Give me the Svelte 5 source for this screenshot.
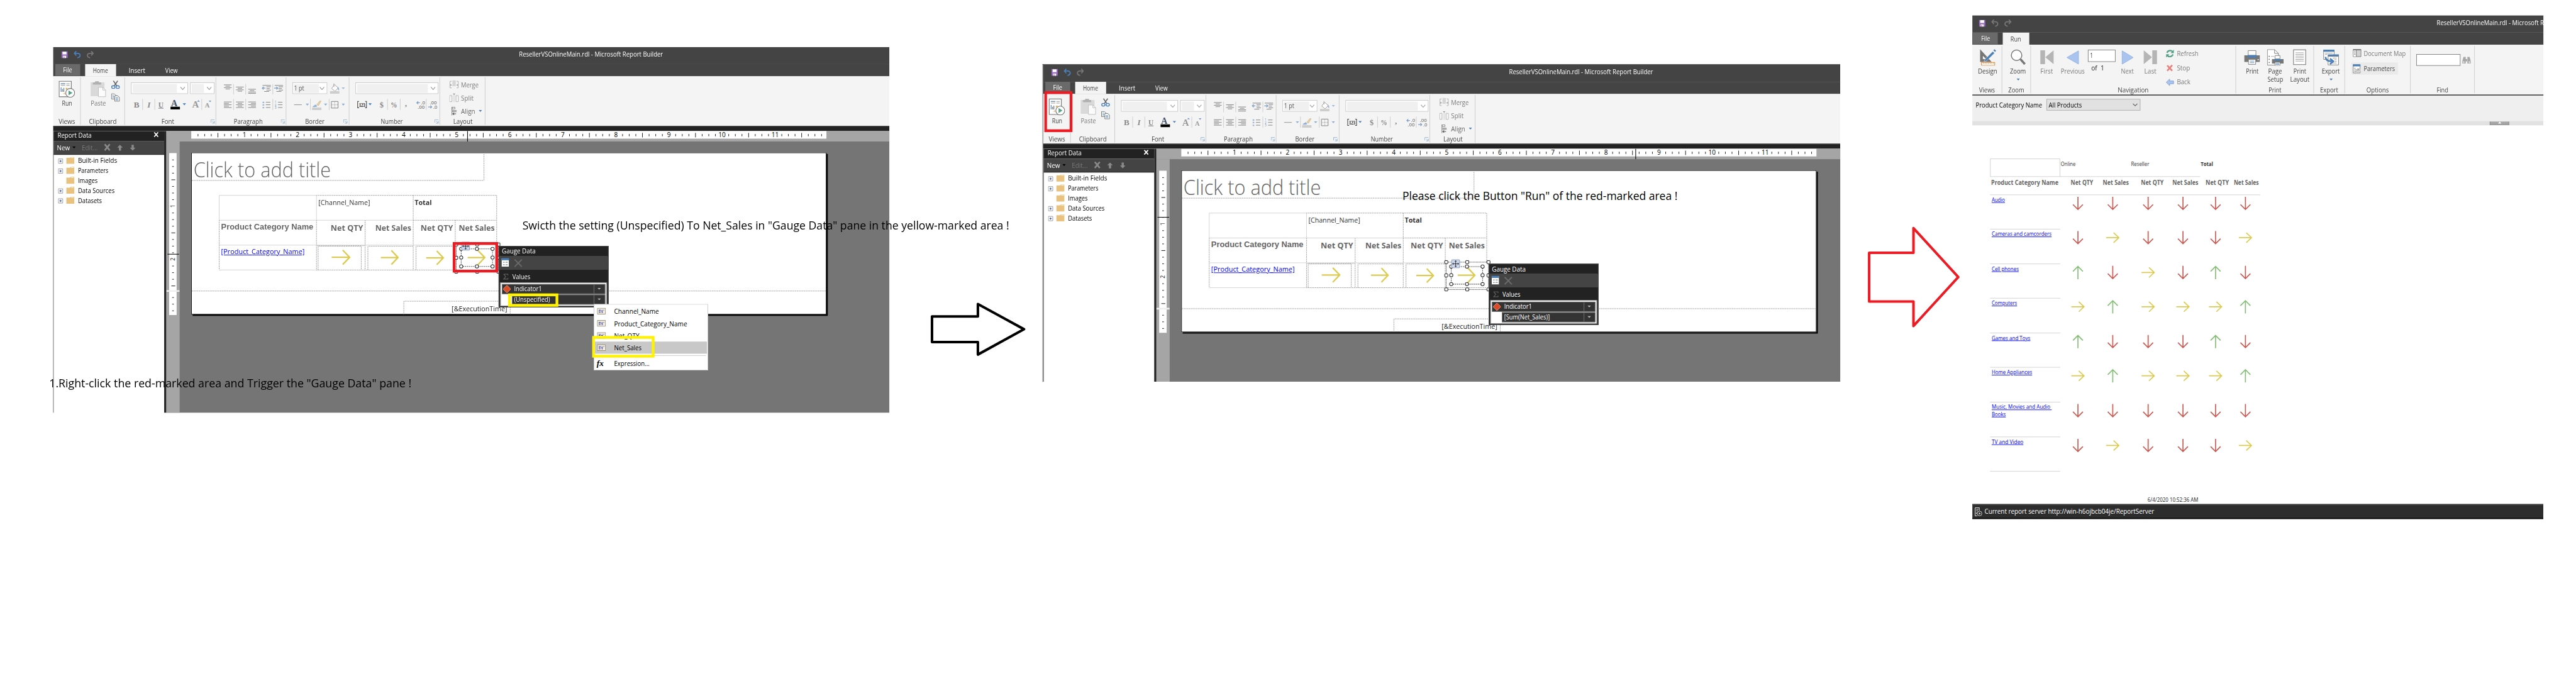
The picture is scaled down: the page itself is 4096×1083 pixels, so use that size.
<script>
  // Squeezes or stretches a label horizontally so that it takes exactly `w` pixels.
  function fit(node, w) {
    const n = node.offsetWidth;
    if (!n || !w) return;
    node.style.transform = `scaleX(${w / n})`;
    node.style.marginRight = `${w - n}px`;
  }

  const hTicks = Array.from({ length: 95 }, (_, i) => i + 1).filter((i) => i % 8);
  const inches = Array.from({ length: 11 }, (_, i) => i + 1);
  const vTicks = Array.from({ length: 20 }, (_, i) => i + 1).filter((i) => i % 8);

  const tree = [
    ['Built-in Fields', 71, true],
    ['Parameters', 55, true],
    ['Images', 35.5, false],
    ['Data Sources', 66.5, true],
    ['Datasets', 43.5, true]
  ];

  const menu = [
    ['Channel_Name', 81],
    ['Product_Category_Name', 132],
    ['Net_QTY', 45.5],
    ['Net_Sales', 49.5]
  ];

  const rows = [
    { lines: [['Audio', 24.2]], a: 'dddddd' },
    { lines: [['Cameras and camcorders', 108]], a: 'drdddr' },
    { lines: [['Cell phones', 49.3]], a: 'udrdud' },
    { lines: [['Computers', 46]], a: 'rurrru' },
    { lines: [['Games and Toys', 69.7]], a: 'udddud' },
    { lines: [['Home Appliances', 73]], a: 'rurrru' },
    { lines: [['Music, Movies and Audio\u00a0', 108.5], ['Books', 25.3]], a: 'dddddd' },
    { lines: [['TV and Video', 57]], a: 'drdddr' }
  ];
  const heads = [40.5, 46.8, 41, 46.5, 42, 45];
  const turn = { d: 90, r: 0, u: -90 };
  const tint = { d: '#cb5a52', r: '#dccb50', u: '#85be76' };
</script>

{#snippet T(s, w, c)}<span class="t {c ?? ''}" use:fit={w}>{s}</span>{/snippet}

{#snippet quick(undo)}
  <svg class="quick" width="62" height="14" viewBox="0 0 62 14">
    <path fill="#9a6bc0" d="M0 1h11.5v12H0z" /><path fill="#fff" d="M2.2 1.5h7v5h-7zM3 9h5.500v4H3z" /><path fill="#9a6bc0" d="M4.200 10.500h1.500V13H4.200z" />
    <g fill="none" stroke={undo} stroke-width="2"><path d="M27 .5 23.500 4.500 27 8.500M24 4.500h5.500c6 0 6 7-.5 8" /></g>
    <g fill="none" stroke="#777" stroke-width="2"><path d="M54 .5 57.500 4.500 54 8.500M57 4.500h-5.500c-6 0-6 7 .5 8" /></g>
  </svg>
{/snippet}

{#snippet launcher()}
  <svg class="launch" width="8" height="8" viewBox="0 0 8 8"><path fill="none" stroke="#8fb0cf" d="M.5 6V.500H7M3 3l3.500 3.500M7 3v4H3" /><path fill="#b9cadb" d="M3.500 7 7 3.500V7z" /></svg>
{/snippet}

{#snippet combo(c, text)}
  <div class="combo {c}"><div class="fill">{#if text}{@render T(text, 18.5)}{/if}</div>
    <svg width="9" height="6" viewBox="0 0 9 6"><path d="M.5.500l4 4.500 4-4.500" fill="none" stroke="#999" stroke-width="1.2" /></svg></div>
{/snippet}

{#snippet homeRibbon()}
  <div class="ribbon">
    <section class="group views">
      <div class="tools"><div class="big">
        <svg width="30" height="31" viewBox="0 0 30 31">
          <path d="M1 1h22v28H1z" fill="#fff" stroke="#777" stroke-width="1.300" />
          <path d="M4 5.500h8M4 8.500h8M14 5.500h6M14 8.500h6" stroke="#8a8a8a" /><path d="M4 5.500h8" stroke="#4a7fb8" />
          <path d="M4.500 12v8M7 15v5M9.500 13v7" stroke="#4a7fb8" stroke-width="1.300" /><path d="M7.500 16v4" stroke="#e08a3c" stroke-width="1.300" />
          <path d="M13 13h3v3h-3z" fill="#e5b04e" /><path d="M9 24l2-2 1 3" stroke="#e08a3c" fill="none" />
          <circle cx="21" cy="22" r="8" fill="#fff" stroke="#777" stroke-width="1.200" /><path d="M18 17.500v9l7-4.500z" fill="#56a288" />
        </svg>
        {@render T('Run', 18.500)}
      </div></div>
      <footer>{@render T('Views', 30)}</footer>
    </section>
    <section class="group clip">
      <div class="tools clips">
        <div class="big">
          <svg width="30" height="31" viewBox="0 0 30 31">
            <path d="M1 3h25v25H1z" fill="#d9d9d9" /><path d="M5 3h4V1h7v2h4v4H5z" fill="#b0b0b0" />
            <path d="M15 12h8l5 5v12H15z" fill="#fbfbfb" stroke="#bbb" /><path d="M23 12v5h5" fill="none" stroke="#bbb" />
          </svg>
          <span class="dim">{@render T('Paste', 28)}</span>
        </div>
        <div class="side">
          <svg width="16" height="15" viewBox="0 0 16 15"><path d="M4 0l6 9M12 0 6 9" stroke="#666" stroke-width="1.800" /><g fill="none" stroke="#4a7fb8" stroke-width="1.500"><ellipse cx="4" cy="11.500" rx="3" ry="2.500" /><ellipse cx="12" cy="11.500" rx="3" ry="2.500" /></g></svg>
          <svg width="16" height="15" viewBox="0 0 16 15"><path d="M.7.700h5l3 3V10h-8z" fill="#fff" stroke="#666" /><path d="M6.700 4.200h5l3.300 3v7H6.700z" fill="#fff" stroke="#666" /><path d="M2.500 3.500h2M2.500 5.500h3M2.500 7.500h3M8.500 8h4M8.500 10h4M8.500 12h4" stroke="#4a7fb8" /></svg>
        </div>
      </div>
      <footer>{@render T('Clipboard', 49.500)}</footer>
    </section>
    <section class="group font">
      <div class="tools">
        <div class="line">{@render combo('family')}{@render combo('size')}</div>
        <svg width="165" height="24" viewBox="225.500 177 165 24" class="strip">
          <g class="glyph"><text x="241.500" y="194" font-weight="700">B</text><text x="266" y="194" font-style="italic">I</text><text x="286" y="194" text-decoration="underline" font-size="13">U</text></g>
          <text x="309" y="192.500" class="serif" font-size="16" fill="#44546a">A</text><path d="M308 193h17v5h-17z" />
          <path d="M330 187h6l-3 3.500z" fill="#4a7fb8" />
          <text x="347" y="195" class="serif" font-size="17" fill="#999">A</text><text x="370" y="195" class="serif" font-size="12" fill="#999">A</text>
          <path d="M356 184l2.500-3 2.500 3zM377 182h5l-2.500 3z" fill="#7f9fc4" />
          <path d="M257.500 179v20M279.500 179v20M364.500 179v20" stroke="#c9c9c9" />
        </svg>
      </div>
      <footer>{@render T('Font', 23)}{@render launcher()}</footer>
    </section>
    <section class="group para">
      <div class="tools">
        <svg width="127" height="70" viewBox="391 138 127 70">
          <path d="M422.500 152v19M444.500 152v19M493.500 152v19M422.500 179v20M444.500 179v20M493.500 179v20" stroke="#c9c9c9" />
          <path stroke="#777" d="M405 153.500h14M408 156h8M405 158.500h14M408 161h8M427 157.500h14M430 160h8M427 162.500h14M430 165h8M449 161.500h14M452 164h8M449 166.500h14M449 169h14M405 184.500h14M405 187h9M405 189.500h14M405 192h9M405 194.500h14M427 184.500h14M430 187h8M427 189.500h14M430 192h8M427 194.500h14M449 184.500h14M454 187h9M449 189.500h14M454 192h9M449 194.500h14M475 154.500h15M482 157h8M482 160h6M482 163h8M478 165.500h9M497 154.500h15M504 157h8M504 160h6M504 163h8M500 165.500h9M481 185h8M481 189.500h8M481 194.500h8M503 185h8M503 189.500h8M503 194.500h8" />
          <path d="M474 159.500h6M477 157l-2.500 2.500 2.500 2.500M496 159.500h6M500 157l2.500 2.500-2.500 2.500" stroke="#7f9fc4" stroke-width="1.500" fill="none" />
          <path d="M475 184h3v2.500h-3zM475 188.500h3v2.500h-3zM475 193.500h3v2.500h-3z" fill="#9fb6d4" />
          <g font-size="5.500" fill="#6f93c0"><text x="497" y="187">1</text><text x="497" y="192">2</text><text x="497" y="197">3</text></g>
        </svg>
      </div>
      <footer>{@render T('Paragraph', 52)}{@render launcher()}</footer>
    </section>
    <section class="group border">
      <div class="tools">
        <div class="line">{@render combo('pt', '1 pt')}
          <svg width="30" height="21" viewBox="596 149 30 21"><path d="M605 153l7 6-6 6-6-5z" fill="#fff" stroke="#999" /><path d="M604 151v6" stroke="#999" /><path d="M611 157c3 2 3 5 2 7l-3-4z" fill="#9fb6d4" /><path d="M597 165h17v4.500h-17z" fill="#cdcdcd" /><path d="M618 158h6l-3 3.500z" fill="#a5bdd8" /></svg>
        </div>
        <svg width="113" height="24" viewBox="518 177 113 24" class="strip">
          <path d="M532 189.500h14" stroke="#888" /><path d="M553 187.500h6l-3 3.500zM586 187.500h6l-3 3.500zM618 187.500h6l-3 3.500z" fill="#8fb0d5" />
          <path d="M561.500 179v20M595.500 179v20" stroke="#c9c9c9" />
          <path d="M565 193l6-4 3 3c-2 2-6 2-9 1z" fill="#8fb0d5" /><path d="M573 189l6-7 2 1-5 8z" fill="#e6cfa0" stroke="#bba26d" stroke-width=".5" /><path d="M564.500 194.500h17v4.500h-17z" fill="#cdcdcd" />
          <path d="M599.500 183.500h12v12h-12z" fill="none" stroke="#777" /><path d="M605.500 184v11M600 189.500h11" stroke="#999" stroke-dasharray="1 1" />
        </svg>
      </div>
      <footer>{@render T('Border', 35)}{@render launcher()}</footer>
    </section>
    <section class="group number">
      <div class="tools">
        <div class="line">{@render combo('fmt')}</div>
        <svg width="164" height="24" viewBox="631.500 177 164 24" class="strip">
          <path d="M649 183.500h-2.500v11.500h2.500M660 183.500h2.500v11.500H660" fill="none" stroke="#444" stroke-width="1.200" /><text x="648.500" y="193" class="serif" font-size="9" textLength="12" fill="#333">123</text>
          <path d="M666 187h6l-3 3.500z" fill="#4a7fb8" />
          <g class="glyph"><text x="686.500" y="194" font-size="14">$</text><text x="706" y="194" font-size="14" textLength="12" lengthAdjust="spacingAndGlyphs">%</text><text x="732" y="192" font-weight="700">,</text></g>
          <path d="M700.500 179v20M723.500 179v20M770.500 179v20" stroke="#c9c9c9" />
          <g font-size="9" fill="#888" font-weight="600"><text x="761" y="189">.0</text><text x="755" y="196.500">.00</text><text x="777" y="189">.00</text><text x="783" y="196.500">.0</text></g>
          <path d="M753 186h6M756 183.500l-2.500 2.500 2.500 2.500M774 193.500h6M778 191l2.500 2.500-2.500 2.500" stroke="#7f9fc4" stroke-width="1.400" fill="none" />
        </svg>
      </div>
      <footer>{@render T('Number', 40)}{@render launcher()}</footer>
    </section>
    <section class="group layout">
      <div class="tools list">
        <div><svg width="17" height="16" viewBox="0 0 17 16"><path d="M4 2H1v12h3M13 2h3v12h-3" fill="none" stroke="#aaa" /><path d="M5.500 0h6v11h-6z" fill="#d5d5d5" /><path d="M1 7l4 2-4 2M16 7l-4 2 4 2" fill="#aaa" /></svg>{@render T('Merge', 32)}</div>
        <div><svg width="17" height="16" viewBox="0 0 17 16"><path d="M.5 4h4v11h-4zM12 4h4v11h-4z" fill="#fff" stroke="#aaa" /><path d="M7 3v13h3V3z" fill="#e2e2e2" /><path d="M6 0h5L8.500 3z" fill="#999" /></svg>{@render T('Split', 22.500)}</div>
        <div class="on"><svg width="17" height="16" viewBox="0 0 17 16"><path d="M4.500 0v16" stroke="#777" /><path d="M5 1h5v3H5z" fill="#fff" stroke="#777" /><path d="M5 6h8v4H5z" fill="#aaa" /><path d="M6 13h6M8.500 11 6 13l2.500 2" stroke="#555" fill="none" stroke-width="1.200" /></svg>{@render T('Align', 26)}<svg class="car" width="6" height="4" viewBox="0 0 6 4"><path d="M0 0h6L3 3.500z" fill="#4a7fb8" /></svg></div>
      </div>
      <footer>{@render T('Layout', 35)}</footer>
    </section>
  </div>
{/snippet}

{#snippet designer(unspecified, hCursor, vCursor)}
  <div class="builder">
    <div class="titlebar">{@render quick('#4a7fb8')}<span class="caption">{@render T('ResellerVSOnlineMain.rdl - Microsoft Report Builder', 260)}</span></div>
    <nav class="tabs">
      <span class="file">{@render T('File', 16.500)}</span><span class="active">{@render T('Home', 27.500)}</span>
      <span class="plain ins">{@render T('Insert', 29.500)}</span><span class="plain">{@render T('View', 22)}</span>
    </nav>
    {@render homeRibbon()}
    <div class="band"></div>
    <div class="work">
      <aside>
        <header>{@render T('Report Data', 61.500)}<svg width="9" height="9" viewBox="0 0 9 9"><path d="M1 .500 8 8.500M8 .500 1 8.500" stroke="#fff" stroke-width="2" /></svg></header>
        <div class="bar">{@render T('New', 23.500)}<svg width="6" height="4" viewBox="0 0 6 4" class="dd"><path d="M0 0h6L3 3.500z" /></svg><span class="off">{@render T('Edit...', 29)}</span>
          <svg width="58" height="14" viewBox="0 0 58 14"><path d="M1.500 1l9 11M10.500 1l-9 11" stroke="#8a8a8a" stroke-width="3" /><path d="M29 2l5 5h-3v5.500h-4V7h-3z" fill="#8a8a8a" /><path d="M52 12.500l5-5h-3V2h-4v5.500h-3z" fill="#8a8a8a" /></svg>
        </div>
        <ul>
          {#each tree as [name, w, open]}
            <li>
              <svg width="30" height="15" viewBox="0 0 30 15">
                {#if open}<path d="M.5 4.500h8v8h-8z" fill="#f4f6fa" stroke="#999" /><path d="M2.500 8.500h4M4.500 6.500v4" stroke="#2a4a8a" />{/if}
                <path d="M15 2.500h6.500l1.500-1.500h6.500v12.500H15z" fill="#e8c27e" /><path d="M23.500 2.200h5" stroke="#fff" />
              </svg>{@render T(name, w)}
            </li>
          {/each}
        </ul>
      </aside>
      <div class="surface">
        <svg class="hruler" height="19" width="1308" viewBox="301 237 1308 19">
          <path d="M346 237h1149v14H346z" fill="#fff" />
          {#each hTicks as i}<path d={i % 4 ? `M${346.2 + i * 12} 242.500v4` : `M${346.2 + i * 12} 240.500v8`} stroke="#000" />{/each}
          {#each inches as n}<text x={346.2 + n * 96} y="248.300" text-anchor="middle" font-size="11.500">{n}</text>{/each}
          <path d="M{hCursor} 237v19" stroke="#000" stroke-width="1.200" />
        </svg>
        <div class="lower">
          <svg class="vruler" width="24" height="491" viewBox="301 256 24 491">
            <path d="M306 277h13.500v293H306" fill="#fff" /><path d="M301 525h24v3h-24z" fill="#eee" />
            {#each vTicks as i}<path d={i % 4 ? `M311.500 ${277.3 + i * 12}h3` : `M310 ${277.3 + i * 12}h7`} stroke="#000" />{/each}
            {#each [1, 2, 3] as i}<path d="M311.500 {526.3 + i * 12}h3" stroke="#000" />{/each}
            {#each [1, 2] as n}<text font-size="10" text-anchor="middle" transform="translate(316 {277 + n * 96}) rotate(-90)">{n}</text>{/each}
            <path d="M303 {vCursor}h21" stroke="#000" stroke-width="1.200" />
          </svg>
          <div class="canvas">
            <div class="page">
              <svg class="rules" width="1149" height="292" viewBox="346 277 1149 292">
                <g fill="none" stroke="#8c8c8c" stroke-dasharray="2 1.200">
                  <path d="M347 326.500h528.500M875.500 279v47M572 353.500h326.500M747 398.500h151M898.500 353.500v90M747.500 353.500v135M572.500 398.500v90M660.500 398.500v90M823.500 398.500v90M396.500 398.500v90M572 488.500h326M347 526.500h1147M730.500 569v-24h192.500v24M575.500 488v-42.500h78V488M665.500 488v-42.500h81.500M752.500 488v-42.500h71M574 444.500h86" />
                </g>
                <path d="M396.500 398.500V353.500h176v45M396 398.500h351M396 443.500h427M396 488.500h176" fill="none" stroke="#cfcfcf" />
                <g fill="none" stroke="#dccb50" stroke-width="2.600">
                  <path d="M600 465.500h32M620 452.500l12.500 13-12.500 13" /><path d="M689 466h31M708 453l12 13-12 12.500" /><path d="M771 466.500h31M790 454l12 12.500-12 12.500" /><path d="M846 466h31M864 452.500l13 13.500-13 13.500" />
                </g>
                <g fill="none" stroke="#000"><path d="M825.300 442.300h76.500v49.500h-76.500z" stroke-dasharray="1 1" /><path d="M834.300 450.300H891v31.800h-56.700z" stroke-dasharray="2 1.500" stroke="#444" stroke-width="1.200" /></g>
                <g fill="#fff" stroke="#000">
                  {#each [[825.3, 442.3], [863.3, 442.3], [901.7, 442.3], [825.3, 466.3], [901.7, 466.3], [825.3, 491.6], [863.3, 491.6], [901.7, 491.6]] as [x, y]}<rect x={x - 2.800} y={y - 2.800} width="5.600" height="5.600" rx=".8" />{/each}
                  {#each [[834.3, 450.3], [862.7, 450.3], [891, 450.3], [834.3, 466], [891, 466], [834.3, 482], [862.7, 482], [891, 482]] as [x, y]}<circle cx={x} cy={y} r="3" stroke="#333" stroke-width="1.200" />{/each}
                </g>
                <rect x="835" y="438" width="14.500" height="14.500" rx="1" fill="#cdd8ec" stroke="#8495b5" /><path d="M842.300 440v10.500M837 445.300h10.500M840.800 441.500l1.500-2 1.500 2M840.800 449l1.500 2 1.500-2M838.500 443.800l-2 1.500 2 1.500M846 443.800l2 1.500-2 1.500" stroke="#222" fill="none" />
              </svg>
              <div class="title">{@render T('Click to add title', 249)}</div>
              <div class="tablix">
                <span></span><span class="field wide">{@render T('[Channel_Name]', 93)}</span><span class="field total">{@render T('Total', 31)}</span>
                <span class="head pcn">{@render T('Product Category Name', 167)}</span>
                <span class="head">{@render T('Net QTY', 59)}</span><span class="head">{@render T('Net Sales', 64.500)}</span><span class="head">{@render T('Net QTY', 59)}</span><span class="head">{@render T('Net Sales', 64.500)}</span>
                <span class="key"><u class="t" use:fit={151}>[Product_Category_Name]</u></span>
              </div>
              <div class="exec">{@render T('[&ExecutionTime]', 100.500)}</div>
            </div>
          </div>
        </div>
      </div>
    </div>
    {#if unspecified}<div class="mark red cell"></div>{/if}
    <div class="gauge">
      <header>{@render T('Gauge Data', 60.500)}</header>
      <div class="gbar"><svg width="40" height="18" viewBox="0 0 40 18"><path d="M.5.500h13v15H.500z" fill="#fff" /><path d="M.3 0h13.400v4H.300z" fill="#4a7fb8" /><path d="M3 7.500h3M3 12h3M7.500 7.500h4M7.500 12h4" stroke="#555" /><path d="M24 2.500 37 15.500M37 2.500 24 15.500" stroke="#6a6a6a" stroke-width="2.200" /></svg></div>
      <div class="gval"><svg width="10" height="11" viewBox="0 0 10 11"><path d="M1 1h8v2.500M1 1l4 4.500L1 10h8V7.500" fill="none" stroke="#666" stroke-width="1.200" /></svg>{@render T('Values', 32.500)}</div>
      <div class="gbox">
        <div class="gitem"><svg width="14" height="14" viewBox="0 0 14 14"><path d="M7 0l7 7-7 7-7-7z" fill="#dc4a26" stroke="#e8a48e" /></svg><div class="glabel">{@render T('Indicator1', 50.500)}</div><i></i></div>
        <div class="gitem second"><div class="glabel">{#if unspecified}{@render T('(Unspecified)', 65)}{:else}{@render T('[Sum(Net_Sales)]', 82.500)}{/if}</div><i></i></div>
      </div>
    </div>
  </div>
{/snippet}

{#snippet cmd(icon, a, wa, b, wb, cls)}
  <div class="big {cls ?? ''}">{@render icon()}{@render T(a, wa)}{#if b === 'v'}<svg class="vcar" width="6" height="4" viewBox="0 0 6 4"><path d="M0 0h6L3 3.500z" fill="#4a7fb8" /></svg>{:else if b}<span class="nextline">{@render T(b, wb)}</span>{/if}</div>
{/snippet}

{#snippet iDesign()}<svg width="30" height="30" viewBox="0 0 30 30"><path d="M1 0v23h21zM6 12v6h6z" fill="#777" fill-rule="evenodd" /><path d="M24 4l3 3-14 14-5 2 2-5z" fill="#4a7fb8" stroke="#f4f4f4" stroke-width=".6" /><path d="M25 2l2-2 3 3-2 2z" fill="#4a7fb8" /><path d="M3.500 24h24v5.300h-24z" fill="#fff" stroke="#e08a3c" stroke-width="1.200" /><path d="M7 24v2.500M10 24v2.500M13 24v2.500M16 24v2.500M19 24v2.500M22 24v2.500M25 24v2.500" stroke="#e08a3c" /></svg>{/snippet}
{#snippet iZoom()}<svg width="30" height="30" viewBox="0 0 30 30"><path d="M19 18l8 9" stroke="#777" stroke-width="4" /><circle cx="12" cy="11" r="9.500" fill="#fff" stroke="#777" stroke-width="1.700" /></svg>{/snippet}
{#snippet iFirst()}<svg width="30" height="30" viewBox="0 0 30 30"><path d="M3 2h8.500v25H3zM27 2v25L12 14.500z" fill="#b5b5b5" /></svg>{/snippet}
{#snippet iPrev()}<svg width="30" height="30" viewBox="0 0 30 30"><path d="M25 3v24L4 15z" fill="#a9c4ee" stroke="#8fb0e0" /></svg>{/snippet}
{#snippet iNext()}<svg width="30" height="30" viewBox="0 0 30 30"><path d="M5 3v24l20-12z" fill="#a9c4ee" stroke="#8fb0e0" /></svg>{/snippet}
{#snippet iLast()}<svg width="30" height="30" viewBox="0 0 30 30"><path d="M27 2h-8.500v25H27zM3 2v25l15-12.500z" fill="#b5b5b5" /></svg>{/snippet}
{#snippet iPrint()}<svg width="30" height="30" viewBox="0 0 30 30"><path d="M1 11h28v12H1z" fill="#777" /><path d="M8 2.500h14v9H8z" fill="#fff" stroke="#777" /><path d="M7 10.500h16V15H7z" fill="#4a7fb8" /><path d="M8.500 18.500h13v9h-13z" fill="#fff" stroke="#777" /><path d="M11 21.500h8M11 24.500h8" stroke="#4a7fb8" /><path d="M25 18h2v2h-2z" fill="#fff" /></svg>{/snippet}
{#snippet iSetup()}<svg width="30" height="30" viewBox="0 0 30 30"><path d="M.7.700h13l7 7v21h-20z" fill="#fff" stroke="#777" /><path d="M13.700.700v7h7" fill="none" stroke="#777" /><path d="M3 13h2M3 18.500h2M3 24h2" stroke="#777" stroke-width="2" /><path d="M7 13h6" stroke="#aaa" /><path d="M9 18h21v8H9z" fill="#777" /><path d="M14.500 11.500h9v6h-9z" fill="#fff" stroke="#777" /><path d="M13 18h13v2.500H13z" fill="#4a7fb8" /><path d="M14.500 23.500h9v6h-9z" fill="#fff" stroke="#777" /><path d="M16 25.500h6M16 27.500h6" stroke="#4a7fb8" /></svg>{/snippet}
{#snippet iLayout()}<svg width="30" height="30" viewBox="0 0 30 30"><path d="M4 1h22v27H4z" fill="#fff" stroke="#777" stroke-width="1.200" /><path d="M7.500 6.500h15M7.500 9.500h15M7.500 12.500h15M7.500 15.500h15M7.500 18.500h15M7.500 21.500h15" stroke="#999" /></svg>{/snippet}
{#snippet iExport()}<svg width="30" height="30" viewBox="0 0 30 30"><path d="M1.500 1.500h19v17h-19z" fill="#fff" stroke="#777" /><path d="M1 1h20v3.500H1zM9 9.500h20V13H9z" fill="#4a7fb8" /><path d="M4 7h14M4 9.500h4" stroke="#999" /><path d="M9.500 13h19v15.500h-19z" fill="#fff" stroke="#777" /><path d="M18 16h7M21 19h4M22 22h3M17 25h8" stroke="#999" /><path d="M5 14c0 6 4 8 11 8M13 17l6 5-6 5" fill="none" stroke="#4a7fb8" stroke-width="3" /></svg>{/snippet}

<main>
  <div class="stage">
    <figure class="one">
      {@render designer(true, 845.8, 460)}
      <div class="menu">
        {#each menu as [name, w], i}
          <div class="mi" class:sel={i === 3}><svg width="16" height="12" viewBox="0 0 16 12"><path d="M.7.700h14.600v10.600H.700z" fill="#f6f3e6" stroke="#8c8062" /><path d="M3 4h4M8.500 4h1.500M11.500 4h1.500M3 6h3M7 6h4M3 8.300h3.500M8 8.300h3" stroke="#22228a" /></svg>{@render T(name, w)}</div>
        {/each}
        <hr />
        <div class="mi"><b>fx</b>{@render T('Expression...', 63.500)}</div>
      </div>
      <div class="mark yellow value"></div>
      <div class="mark yellow item"></div>
      <p class="note n1">{@render T('Swicth the setting (Unspecified) To Net_Sales in "Gauge Data" pane in the yellow-marked area !', 881)}</p>
      <p class="note n2">{@render T('1.Right-click the red-marked area and Trigger the "Gauge Data" pane !', 655)}</p>
    </figure>

    <svg class="step black" width="174" height="106" viewBox="1682 543 174 106"><path d="M1686 572.500h83V550l83.500 45.700L1769 641.500v-22.700h-83z" fill="#fff" stroke="#000" stroke-width="4.600" stroke-linejoin="round" /></svg>

    <figure class="two">
      {@render designer(false, 1168, 361)}
      <div class="mark red run"></div>
      <p class="note n3">{@render T('Please click the Button "Run" of the red-marked area !', 497.500)}</p>
    </figure>

    <svg class="step crimson" width="168" height="186" viewBox="3378 408 168 186"><path d="M3381.300 457.300h80.200v-44.500l81 88.500-81 88.500v-44.300h-80.200z" fill="#fff" stroke="#ed1c24" stroke-width="4.600" stroke-linejoin="round" /></svg>

    <figure class="three">
      <div class="titlebar">{@render quick('#777')}<span class="caption">{@render T('ResellerVSOnlineMain.rdl - Microsoft Report Builder', 260)}</span></div>
      <nav class="tabs"><span class="file">{@render T('File', 16)}</span><span class="active">{@render T('Run', 19)}</span></nav>
      <div class="ribbon">
        <section class="group g1"><div class="tools">{@render cmd(iDesign, 'Design', 35)}</div><footer>{@render T('Views', 29)}</footer></section>
        <section class="group g2"><div class="tools">{@render cmd(iZoom, 'Zoom', 28.500, 'v')}</div><footer>{@render T('Zoom', 28.500)}</footer></section>
        <section class="group g3">
          <div class="tools navi">
            {@render cmd(iFirst, 'First', 22.500, '', 0, 'c36')}
            {@render cmd(iPrev, 'Previous', 43, '', 0, 'c47')}
            <div class="pager"><div>{@render T('1', 5)}</div>{@render T('of  1', 23, 'of')}</div>
            {@render cmd(iNext, 'Next', 22.500, '', 0, 'c32 nx')}
            {@render cmd(iLast, 'Last', 22, '', 0, 'c32 lt')}
            <div class="acts">
              <div><svg width="15" height="14" viewBox="0 0 15 14"><path d="M2 5.500C4 1 10 0 12.500 4M13 8.500C11 13 5 14 2.500 10" fill="none" stroke="#56a288" stroke-width="2.600" /><path d="M14.500 0v6h-6zM.5 14V8h6z" fill="#56a288" /></svg>{@render T('Refresh', 39)}</div>
              <div><svg width="15" height="14" viewBox="0 0 15 14"><path d="M2.500 2.500l9 9.500M11.500 2l-9 10" stroke="#e8827c" stroke-width="3" /></svg>{@render T('Stop', 23.500)}</div>
              <div><svg width="15" height="14" viewBox="0 0 15 14"><path d="M.7 7 7 1v3.500h7v5H7V13z" fill="#a9c4ee" stroke="#7f9fd0" /></svg>{@render T('Back', 24)}</div>
            </div>
          </div>
          <footer>{@render T('Navigation', 56)}</footer>
        </section>
        <section class="group g4">
          <div class="tools navi">{@render cmd(iPrint, 'Print', 23, '', 0, 'c37')}{@render cmd(iSetup, 'Page', 25, 'Setup', 28, 'c37 s')}{@render cmd(iLayout, 'Print', 23, 'Layout', 35, 'c39')}</div>
          <footer>{@render T('Print', 23)}</footer>
        </section>
        <section class="group g5"><div class="tools">{@render cmd(iExport, 'Export', 33, 'v')}</div><footer>{@render T('Export', 33)}</footer></section>
        <section class="group g6">
          <div class="tools opts">
            <div><svg width="16" height="16" viewBox="0 0 16 16"><path d="M1 1.500h14v13H1z" fill="#d2d2d2" stroke="#777" /><path d="M1 2h14" stroke="#777" stroke-width="2" /><path d="M1.500 3.500h4.500v10.500h-4.500z" fill="#fff" /><path d="M6.500 3v11M2.500 5.500h2.500M2.500 8h2.500M2.500 10.500h2.500" stroke="#777" /></svg>{@render T('Document Map', 75.500)}</div>
            <div class="pressed"><svg width="16" height="17" viewBox="0 0 16 17"><path d="M1 1h12.500v15H1z" fill="#fff" stroke="#777" /><path d="M.5.500h13.500V4H.500z" fill="#4a7fb8" /><path d="M3 7.500h2M3 10.500h4M3 13.500h4" stroke="#555" /><text x="6.500" y="14" font-size="8.500" fill="#555" stroke="#fff" stroke-width="1.500" paint-order="stroke">@</text></svg>{@render T('Parameters', 56.500)}</div>
          </div>
          <footer>{@render T('Options', 40)}</footer>
        </section>
        <section class="group g7">
          <div class="tools find"><div></div><svg width="16" height="14" viewBox="0 0 16 14"><path d="M2.500 1h4v12H.500V8zM13.500 1h-4v12h6V8zM6 5h4v4H6z" fill="#a8a8a8" /><path d="M2 9h2v3H2zM12 9h2v3h-2z" fill="#eee" /></svg></div>
          <footer>{@render T('Find', 21)}</footer>
        </section>
      </div>
      <div class="params"><div class="plabel">{@render T('Product Category Name', 120.500)}</div><div class="select">{@render T('All Products', 60.500)}<svg width="9" height="6" viewBox="0 0 9 6"><path d="M.5.500l4 4 4-4" fill="none" stroke="#555" stroke-width="1.200" /></svg></div></div>
      <div class="splitter"><div><svg width="6" height="4" viewBox="0 0 6 4"><path d="M0 3.500h6L3 0z" fill="#fff" /></svg></div></div>
      <div class="report">
        <div class="grid">
          <span class="corner"></span><span class="c2 ln">{@render T('Online', 27)}</span><span class="c2 ln">{@render T('Reseller', 33)}</span><span class="c2 tot">{@render T('Total', 22)}</span>
          <span class="h first">{@render T('Product Category Name', 121.500)}</span>
          {#each heads as w, i}<span class="h">{@render T(i % 2 ? 'Net Sales' : 'Net QTY', w)}</span>{/each}
          {#each rows as r}
            <span class="name">{#each r.lines as [s, w]}<span><u class="t" use:fit={w}>{s}</u></span>{/each}</span>
            {#each r.a.split('') as k}
              <span class="ind"><svg width="30" height="30" viewBox="-15 -15 30 30"><path transform="rotate({turn[k]})" d={k === 'r' ? 'M-12 0h22.500M1.500-9l9.500 9-9.500 9' : 'M-12 0h22.500M2-9l9 9-9 9'} fill="none" stroke={tint[k]} stroke-width="1.900" /></svg></span>
            {/each}
          {/each}
        </div>
        <div class="stamp">{@render T('6/4/2020 10:52:36 AM', 92)}</div>
      </div>
      <div class="status"><svg width="14" height="16" viewBox="0 0 14 16"><path d="M1 .700h7.500v5M1 .700v14.500h4M3 3.500h4M3 6h3" stroke="#ddd" fill="none" stroke-width="1.200" /><path d="M2.500 9.500h2v2h-2z" fill="#ddd" /><circle cx="9" cy="11" r="4.200" fill="#2d2d2d" stroke="#ddd" /><path d="M7.800 8.800v4.400l3.400-2.200z" fill="#ddd" /></svg>{@render T('Current report server http://win-h6ojbcb04je/ReportServer', 306.500)}</div>
    </figure>
  </div>
</main>

<style>
  :global(body) { background: #fff; overflow: hidden; }
  main { width: 4096px; height: 1083px; overflow: hidden; background: #fff; }
  .stage {
    width: 4660px; height: 1232px; transform: scale(0.878970); transform-origin: 0 0;
    display: flex; align-items: flex-start; padding-left: 96px; box-sizing: border-box;
    font: 12px/15px "Open Sans", "Noto Sans", sans-serif; color: #444;
  }
  * { box-sizing: border-box; }
  figure, p, ul { margin: 0; padding: 0; }
  figure { position: relative; flex: none; }
  svg { display: block; flex: none; }
  .strip { overflow: visible; }
  .t { display: inline-block; flex: none; white-space: pre; transform-origin: 0 50%; }
  .serif { font-family: "Liberation Serif", serif; font-weight: 700; }
  .glyph { font-family: "Liberation Serif", serif; font-size: 15px; fill: #888; font-weight: 700; }

  .one { width: 1513px; height: 662px; margin-top: 85px; }
  .two { width: 1443px; height: 575px; margin: 116px 0 0 30px; border: solid #444; border-width: 1px 0 0 1px; }
  .three { width: 1033px; height: 911px; margin: 28px 0 0 22px; display: flex; flex-direction: column; }
  .step.black { margin: 543px 0 0 73px; }
  .step.crimson { margin: 408px 0 0 49px; }

  .builder { height: 100%; display: flex; flex-direction: column; position: relative; overflow: hidden; }
  .titlebar { height: 31px; background: #444; display: flex; flex: none; padding-left: 15px; overflow: hidden; }
  .quick { margin-top: 7px; }
  .caption { color: #fff; margin: 5px 0 0 766px; white-space: nowrap; }
  .tabs { height: 22px; background: #444; display: flex; flex: none; color: #fff; padding-left: 4px; }
  .tabs > span { display: flex; justify-content: center; align-items: center; height: 22px; }
  .tabs > .file { width: 45px; background: #6a6a6a; height: 21px; }
  .active { width: 56px; margin-left: 9px; background: #f4f4f4; color: #444; }
  .plain { margin-left: 22.500px; }
  .plain + .plain { margin-left: 37px; }
  .ribbon { height: 90px; flex: none; background: #f4f4f4; display: flex; }
  .group { flex: none; height: 90px; display: flex; flex-direction: column; background: linear-gradient(#c9c9c9, #c9c9c9) right 2px / 1px 86px no-repeat; background-position: right 2px; }
  .tools { height: 74px; flex: none; }
  .group footer { display: flex; justify-content: center; align-items: center; height: 15px; }
  .launch { margin: 1px 2px 0 auto; }
  .group footer:has(.launch) .t:first-child { margin-left: auto; }
  .views { width: 50px; } .clip { width: 79.500px; } .font { width: 165.500px; } .para { width: 127px; }
  .border { width: 113.500px; } .number { width: 164.500px; } .layout { width: 82px; }
  .big { display: flex; flex-direction: column; align-items: center; padding-top: 8px; }
  .big > .t, .big > .dim { margin-top: 2px; }
  .dim, .list { color: #7a7a7a; }
  .clips { display: flex; padding-left: 17px; }
  .side { display: flex; flex-direction: column; gap: 8px; padding: 8px 0 0 8px; }
  .line { display: flex; padding: 11px 0 0 11px; gap: 4px; height: 39px; }
  .combo { height: 21px; border: 1.300px solid #c6c6c6; background: #fff; display: flex; align-items: center; justify-content: space-between; padding: 0 4px 0 2px; }
  .combo .fill { background: #f0f0f0; height: 16px; display: flex; }
  .family { width: 103px; } .family .fill { width: 80px; }
  .size { width: 44px; } .size .fill { width: 22px; }
  .pt { width: 63px; } .pt .fill { width: 45px; color: #555; }
  .fmt { width: 150px; } .fmt .fill { width: 128px; }
  .list { display: flex; flex-direction: column; padding: 7px 0 0 17px; gap: 8px; }
  .list > div { display: flex; align-items: center; gap: 3.500px; height: 16px; }
  .list > .on { color: #666; }
  .car { margin-left: 3px; }
  .band { height: 9px; flex: none; background: #222; border-top: 1px solid #444; }
  .work { display: flex; flex: 1; min-height: 0; }
  aside { width: 205px; flex: none; background: #fff; border: solid #222; border-width: 0 4px 0 1px; display: flex; flex-direction: column; }
  aside header { background: #222; color: #fff; height: 18px; display: flex; justify-content: space-between; padding: 0 10px 0 7px; align-items: flex-start; }
  aside header svg { margin-top: 2px; }
  .bar { height: 25px; background: #444; border-bottom: 1px solid #222; display: flex; align-items: center; color: #fff; padding-left: 5.500px; }
  .dd { margin: 0 11px 0 5px; }
  .off { color: #777; }
  .bar > svg:last-child { margin-left: 11px; }
  ul { list-style: none; margin-top: 1px; }
  li { height: 18px; display: flex; align-items: center; padding-left: 8px; gap: 5.500px; color: #000; }
  .surface { flex: none; width: 1308px; display: flex; flex-direction: column; background: #757575; }
  .hruler { background: #a5a5a5; }
  .lower { display: flex; flex: 1; }
  .vruler { background: #a5a5a5; }
  .canvas { padding: 20px 0 0 20.500px; }
  .page { position: relative; width: 1149.500px; height: 292.500px; border: 1px solid #000; background: #fff; box-shadow: 2.500px 2.500px 0 #000; }
  .rules, .title, .tablix, .exec { position: absolute; }
  .rules { left: -1px; top: 0; }
  .title { left: 3px; top: 5px; font-size: 37px; line-height: 50px; font-weight: 300; color: #666; }
  .tablix { left: 50px; top: 76px; display: grid; grid-template: 45px 45px 45px / 176px 88.300px 86.700px 76px 75px; color: #333; }
  .tablix > span { display: flex; align-items: flex-start; font-size: 13px; line-height: 16px; }
  .tablix > .field { grid-column: span 2; padding: 4.500px 0 0 3px; }
  .total { font-weight: 700; }
  .tablix > .head { font-weight: 700; color: #666; font-size: 14.300px; padding: 5.500px 4px 0 0; justify-content: flex-end; }
  .tablix > .pcn { padding: 4px 0 0 3px; justify-content: flex-start; font-family: "Liberation Sans", Arial, sans-serif; }
  .tablix > .key { color: #00f; padding: 4px 0 0 3px; }
  .exec { left: 470px; top: 273px; color: #222; font-size: 13px; line-height: 16px; }

  .gauge { position: absolute; left: 805.500px; top: 360px; width: 199.500px; height: 110.500px; background: #222; border: 1px solid #555; color: #fff; display: flex; flex-direction: column; }
  .gauge header { height: 17px; padding: 1px 0 0 5px; }
  .gbar { height: 24.500px; background: #444; border-radius: 0 2px 0 0; padding: 4px 0 0 4px; }
  .gval { height: 23.500px; display: flex; align-items: center; gap: 7px; padding: 2px 0 0 7px; }
  .gbox { margin: 0 2px; height: 42.500px; background: #fff; border: 1px solid #777; padding: 1.500px 2px; display: flex; flex-direction: column; gap: 1.500px; }
  .gitem { height: 18px; flex: none; background: #333; border: 1px solid #777; display: flex; align-items: center; padding-left: 1px; }
  .glabel { display: flex; flex: 1; padding: 0 0 1px 6px; }
  .second { margin-left: 18px; }
  .second .glabel { padding: 0 0 2px 2px; }
  .gitem i { width: 20px; height: 16px; border-left: 1px solid #777; display: flex; }
  .gitem i::after { content: ""; margin: 6px 0 0 5.500px; border: 3.700px solid transparent; border-top-color: #bbb; height: 0; }

  .menu { position: absolute; left: 978px; top: 465px; width: 207px; height: 119.500px; background: #fff; border: 1px solid #c8c8c8; padding: 1px; color: #000; }
  .mi { height: 22px; display: flex; align-items: center; padding-left: 3.500px; gap: 15px; }
  .mi.sel { background: #c8c8c8; }
  .mi b { font: italic 700 15px/15px "Liberation Serif", serif; width: 16px; }
  hr { margin: 2.500px 2px 2.500px 30px; border: 0; border-top: 1px solid #c8c8c8; }
  .mark { position: absolute; border: 5px solid; }
  .red { border-color: #ed1c24; } .yellow { border-color: #fff200; }
  .cell { left: 723px; top: 353.300px; width: 82px; height: 54.700px; }
  .value { left: 823px; top: 446px; width: 91px; height: 24px; }
  .item { left: 975px; top: 523px; width: 113px; height: 39px; }
  .run { left: 2px; top: 47.500px; width: 51px; height: 74px; }
  .note { position: absolute; font-size: 20px; line-height: 28px; color: #000; white-space: nowrap; }
  .n1 { left: 849px; top: 309px; } .n2 { left: -7px; top: 595px; } .n3 { left: 650px; top: 224px; }

  .three .titlebar { padding-left: 12px; }
  .three .caption { margin-left: 766px; }
  .three .tabs { padding-left: 1px; }
  .three .active { width: 48px; }
  .g1 { width: 53.500px; } .g2 { width: 52px; } .g3 { width: 371px; } .g4 { width: 141.500px; } .g5 { width: 55.500px; } .g6 { width: 119.500px; } .g7 { width: 115.500px; }
  .g1 .big { padding-left: 2px; } .g2 .big { padding-left: 6px; } .g5 .big { padding-left: 6px; }
  .vcar { margin-top: 6px; }
  .navi { display: flex; padding-left: 11px; color: #7a7a7a; }
  .g4 .navi { color: #444; }
  .c36 { width: 36px; } .c47 { width: 47px; margin: 0 3px 0 6px; } .c32 { width: 32px; } .c37 { width: 37px; } .c39 { width: 39px; margin-left: 6px; }
  .s { margin-left: 5px; } .nx { margin-left: 6px; } .lt { margin-left: 9px; }
  .pager { width: 50px; padding-top: 9px; color: #222; }
  .pager > div { height: 21.500px; border: 1px solid #777; background: #fff; padding: 2px 0 0 3px; margin-bottom: 3.500px; }
  .pager > .of { margin-left: 6.500px; }
  .acts { display: flex; flex-direction: column; gap: 11px; padding: 8px 0 0 12px; }
  .acts > div { display: flex; align-items: center; gap: 5px; }
  .three .ribbon { height: 92px; border-bottom: 2px solid #4a4a4a; }
  .opts { padding: 4px 0 0 12px; display: flex; flex-direction: column; gap: 6px; color: #777; }
  .opts > div { height: 22px; display: flex; align-items: center; gap: 4px; padding-left: 2px; width: 84.500px; }
  .opts > .pressed { background: #eaeaea; color: #444; }
  .find { display: flex; gap: 3px; padding: 17px 0 0 10px; align-items: flex-start; }
  .find div { width: 80px; height: 21px; border: 1px solid #777; background: #fff; }
  .find svg { margin-top: 4px; }
  .params { height: 46px; flex: none; background: #efefef; display: flex; align-items: flex-start; padding: 6px 0 0 6px; color: #000; }
  .plabel { display: flex; padding-top: 2.500px; }
  .select { width: 170px; height: 21px; margin-left: 7.500px; border: 1px solid #adadad; background: #e1e1e1; display: flex; align-items: center; justify-content: space-between; padding: 0 4px 0 3px; }
  .splitter { height: 8px; flex: none; background: #e1e1e1; padding: 1px 0 0 936px; }
  .splitter div { width: 35px; height: 6px; background: #a6a6a6; border: solid #8a8a8a; border-width: 0 1px 1px; display: flex; justify-content: center; }
  .report { height: 685px; flex: none; padding: 60px 0 0 32px; background: #fff; }
  .grid { display: grid; grid-template-columns: 127px 63px 64px 63px 63px 55px 54px; grid-template-rows: 32.500px 33px repeat(8, 62.600px); font-size: 10.600px; line-height: 13.400px; }
  .grid > span { display: flex; align-items: flex-start; }
  .corner { border: 1px solid #cfcfcf; }
  .grid > .c2 { grid-column: span 2; padding: 2.500px 0 0 1px; color: #333; font-size: 10px; }
  .ln { border-bottom: 1px solid #cfcfcf; }
  .tot { font-weight: 700; }
  .grid > .h { border-bottom: 1px solid #cfcfcf; justify-content: flex-end; padding: 3.500px 3px 0 0; font-weight: 700; color: #666; font-size: 11px; }
  .grid > .name { flex-direction: column; border-bottom: 1px solid #cfcfcf; color: #00f; padding: 2px 0 0 2.500px; }
  .name > span { display: flex; }
  .ind { justify-content: center; }
  .stamp { margin: 44px 0 0 285px; font-size: 10.600px; display: flex; color: #222; }
  .status { height: 27px; flex: none; background: #2d2d2d; border-top: 2px solid #444; border-bottom: 2px solid #0c0c0c; color: #fff; display: flex; align-items: center; gap: 3.500px; padding-left: 4px; font-size: 13px; }
</style>
